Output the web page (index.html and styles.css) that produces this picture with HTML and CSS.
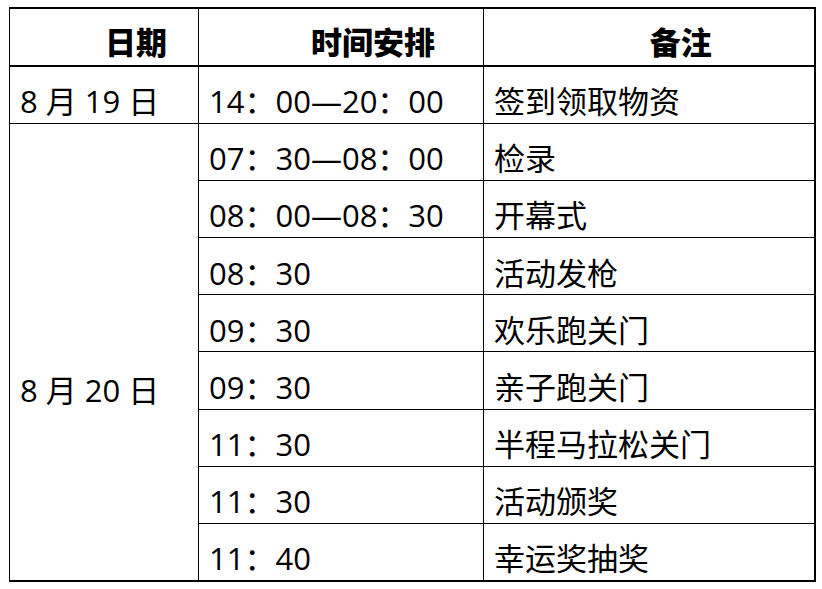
FILE: index.html
```html
<!DOCTYPE html>
<html lang="zh-CN">
<head>
<meta charset="utf-8">
<link rel="stylesheet" href="styles.css">
</head>
<body>
<table class="schedule">
  <colgroup>
    <col class="c-date">
    <col class="c-time">
    <col class="c-note">
  </colgroup>
  <thead>
    <tr class="head">
      <th>日期</th>
      <th>时间安排</th>
      <th>备注</th>
    </tr>
  </thead>
  <tbody>
    <tr><td>8 月 19 日</td><td>14：00—20：00</td><td>签到领取物资</td></tr>
    <tr><td rowspan="8" class="merged">8 月 20 日</td><td>07：30—08：00</td><td>检录</td></tr>
    <tr><td>08：00—08：30</td><td>开幕式</td></tr>
    <tr><td>08：30</td><td>活动发枪</td></tr>
    <tr><td>09：30</td><td>欢乐跑关门</td></tr>
    <tr><td>09：30</td><td>亲子跑关门</td></tr>
    <tr><td>11：30</td><td>半程马拉松关门</td></tr>
    <tr><td>11：30</td><td>活动颁奖</td></tr>
    <tr><td>11：40</td><td>幸运奖抽奖</td></tr>
  </tbody>
</table>
</body>
</html>
```

FILE: styles.css
```css
html, body {
  margin: 0;
  padding: 0;
  background: #fff;
}
body {
  padding: 7px 0 0 9px;
  font-family: "Open Sans", "Noto Sans CJK SC", sans-serif;
  color: #000;
}
.schedule {
  border-collapse: collapse;
  table-layout: fixed;
  width: 805px;
  border-top: 2px solid #000;
  border-left: 1px solid #000;
  border-right: 2px solid #000;
  border-bottom: 2px solid #000;
}
.c-date { width: 189px; }
.c-time { width: 285px; }
.c-note { width: 331px; }
.schedule th,
.schedule td {
  border: 1px solid #000;
  font-size: 31px;
  line-height: 36px;
  padding: 0;
}
.schedule th {
  height: 58px;
  font-family: "Noto Sans CJK SC", sans-serif;
  font-weight: 900;
  text-align: center;
  padding: 7px 0 0 64px;
  border-bottom: 2px solid #000;
  box-sizing: border-box;
}
.schedule td {
  height: 57.2px;
  box-sizing: border-box;
  text-align: left;
  padding: 13px 0 0 10px;
  vertical-align: middle;
}
.schedule td.merged {
  vertical-align: top;
  padding-top: 248px;
}
```
